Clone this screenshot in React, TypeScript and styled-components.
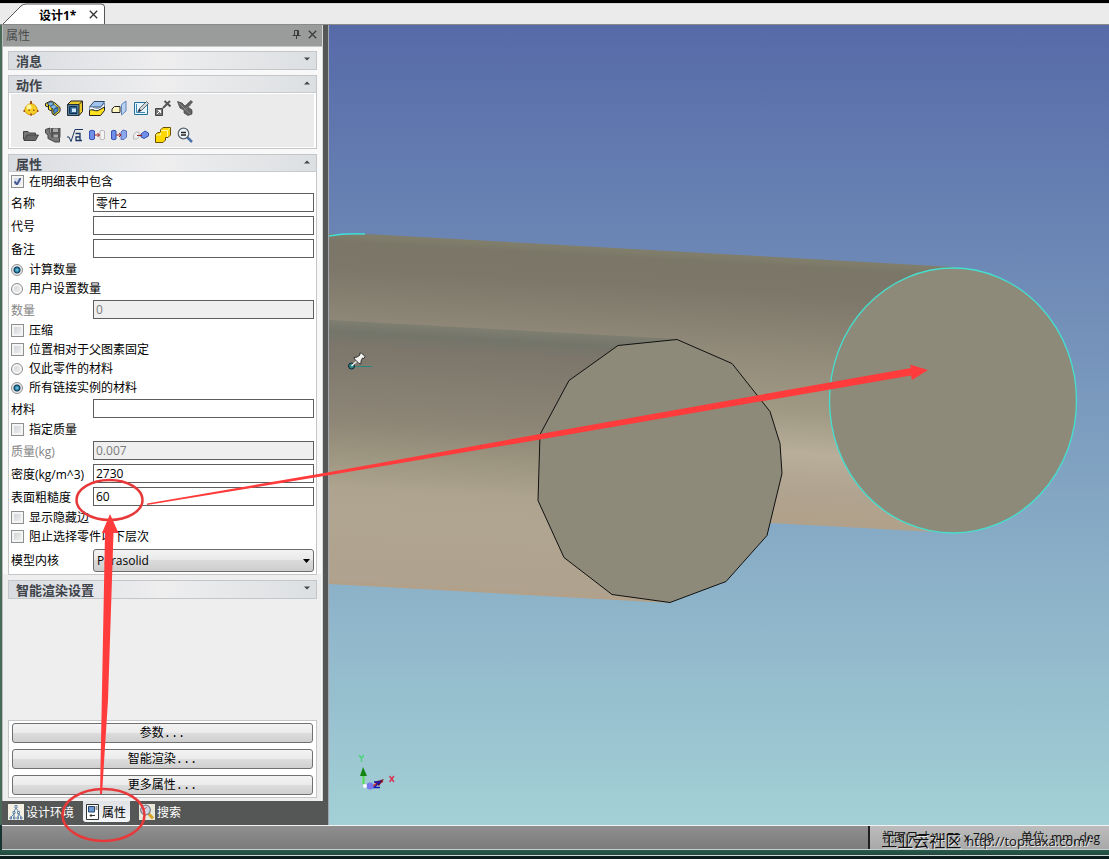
import React from "react";
import styled, { createGlobalStyle } from "styled-components";

const Global = createGlobalStyle`
  * { box-sizing: border-box; }
  body { margin: 0; background: #16332f; }
  body, button, input, select {
    font-family: "Open Sans", "Noto Sans CJK SC", sans-serif;
    font-size: 12px;
    color: #000;
  }
`;

const Shell = styled.div`
  position: relative;
  display: flex;
  flex-direction: column;
  min-height: 100vh;
  overflow: hidden;
`;

const TabBar = styled.header`
  display: flex;
  height: 25px;
  padding-left: 3px;
  border-top: 3px solid #000;
  border-bottom: 1px solid #8a8a8a;
  background: linear-gradient(#d8d8d8 1px, #ebebeb 1px);
`;

const DocTab = styled.div`
  position: relative;
  display: flex;
  align-items: center;
  gap: 13px;
  width: 102px;
  height: 21px;
  padding: 2px 0 0 36px;
  font-weight: 700;
  & > svg:first-child { position: absolute; left: 0; top: 0; }
  & > span, & > button { position: relative; }
`;

const PlainButton = styled.button`
  display: flex;
  align-items: center;
  justify-content: center;
  padding: 0;
  border: 0;
  background: none;
`;

const Main = styled.main`
  display: flex;
  flex: 1;
`;

const Dock = styled.aside`
  display: flex;
  flex-direction: column;
  flex: none;
  width: 329px;
  padding-right: 6px;
  border-left: 2px solid #4a6a58;
  background: linear-gradient(90deg, #555756 5px, #a2a7ad 5px) right / 6px 100% no-repeat, #555756;
`;

const Panel = styled.div`
  display: flex;
  flex-direction: column;
  flex: 1;
  border-left: 1px solid #b9bdbb;
  border-right: 1px solid #d8d8d8;
  background: #eeeeee;
`;

const PanelTitle = styled.div`
  display: flex;
  align-items: center;
  gap: 7px;
  height: 22px;
  padding: 0 5px 2px 3px;
  border-bottom: 1px solid #c4c6c5;
  background: #9a9c9b;
  color: #4a4c4b;
  & > span { flex: 1; }
`;

const Sections = styled.div`
  display: flex;
  flex-direction: column;
  flex: 1;
  gap: 5px;
  padding: 4px 4px 3px 5px;
  border-right: 1px solid #fafafa;
  background: linear-gradient(#f8f8f8 527px, #eeeeee 527px);
`;

const Section = styled.section`
  border: 1px solid #c4c7ca;
  background: #fff;
`;

const SectionHead = styled.h2`
  display: flex;
  align-items: center;
  justify-content: space-between;
  height: 17px;
  margin: 0;
  padding: 1px 6px 0 7px;
  background: linear-gradient(90deg, #d9dce1, #eeeeef 50%, #dcdfe2);
  color: #3f444b;
  font-size: 13px;
  line-height: 18px;
  font-weight: 700;
  &:not(:last-child) { box-shadow: inset 0 -1px #c8cbce; }
  svg { margin-bottom: 4px; }
`;

const Tools = styled.div`
  display: grid;
  grid-template-columns: repeat(8, 22px);
  grid-auto-rows: 27px;
  margin: 0 2px 1px 2px;
  padding-left: 9px;
  border-top: 1px solid #fff;
  background: #ebebeb;
  height: 54px;
`;

const Spacer = styled.div`
  flex: 1;
`;

const Check = styled.label`
  display: flex;
  align-items: center;
  gap: 5px;
  height: 19px;
  padding-left: 2px;
  line-height: 18px;
`;

const Box = styled.input`
  appearance: none;
  width: 13px;
  height: 13px;
  margin: 0;
  border: 1px solid #8e8f8f;
  background: linear-gradient(135deg, #c9cdd2, #f6f6f6);
  box-shadow: inset 0 0 0 2px #f4f4f4;
  &:checked {
    background: url("data:image/svg+xml,%3Csvg xmlns='http://www.w3.org/2000/svg' width='11' height='11'%3E%3Cpath d='M2.5 5.5L5 8.5L8.7 1.8' fill='none' stroke='%23465c96' stroke-width='2'/%3E%3C/svg%3E"),
      linear-gradient(135deg, #ccd2de, #f1f3f8);
  }
  &[type="radio"] {
    border-radius: 50%;
    width: 12px;
    height: 12px;
    margin-right: 1px;
  }
  &[type="radio"]:checked {
    background: radial-gradient(circle at 5px 5px, #8fd0e6 0, #2381a8 2px, #0f3552 3px, #e8eaec 4px);
    box-shadow: none;
  }
`;

const Field = styled.label<{ $off?: boolean; $tall?: boolean }>`
  display: grid;
  grid-template-columns: 82px 1fr;
  align-items: center;
  height: ${(p) => (p.$tall ? 28 : 23)}px;
  padding: 0 2px;
  color: ${(p) => (p.$off ? "#858585" : "#000")};
  white-space: nowrap;
`;

const TextBox = styled.input`
  width: 100%;
  min-width: 0;
  height: 19px;
  padding: 0 2px;
  border: 1px solid #5e5e5e;
  border-radius: 0;
  background: #fff;
  &:disabled { background: #efefef; color: #7b7b7b; }
`;

const SelectWrap = styled.span`
  position: relative;
  svg { position: absolute; right: 4px; top: 10px; pointer-events: none; }
`;

const Select = styled.select`
  display: block;
  appearance: none;
  width: 100%;
  height: 23px;
  padding: 0 3px;
  border: 1px solid #6c6c6c;
  border-radius: 3px;
  background: linear-gradient(#f3f3f3, #e8e8e8 50%, #dadada 50%, #cecece);
`;

const ButtonStack = styled(Section)`
  display: flex;
  flex-direction: column;
  gap: 6px;
  padding: 2px 3px;
`;

const WideButton = styled.button`
  height: 20px;
  padding: 0;
  border: 1px solid #707070;
  border-radius: 3px;
  background: linear-gradient(#f3f3f3, #ebebeb 50%, #dddddd 50%, #cfcfcf);
  line-height: 18px;
  span { font-family: "Liberation Mono", monospace; }
`;

const DockTabs = styled.nav`
  display: flex;
  align-items: flex-start;
  gap: 9px;
  height: 24px;
  padding: 0 0 0 6px;
`;

const DockTab = styled.button<{ $on?: boolean }>`
  display: flex;
  align-items: center;
  gap: 2px;
  height: 21px;
  padding: ${(p) => (p.$on ? "0 4px 0 3px" : "0")};
  border: 0;
  border-radius: 0 0 3px 3px;
  background: ${(p) => (p.$on ? "linear-gradient(#dfe2e6, #f4f6f8)" : "none")};
  color: ${(p) => (p.$on ? "#000" : "#fff")};
`;

const Viewport = styled.div`
  position: relative;
  flex: 1;
  min-width: 0;
  overflow: hidden;
  background: linear-gradient(#566aa8, #a3d0d6);
`;

const Scene = styled.svg`
  position: absolute;
  left: 0;
  top: 0;
  width: 100%;
  height: 100%;
`;

const Status = styled.footer`
  display: flex;
  height: 25px;
  margin: 0 0 0 2px;
  border-top: 1px solid #f2f4f4;
  border-bottom: 1px solid #c4d0cc;
  background: linear-gradient(#8f8f8f, #7b7b7b);
`;

const StatusFill = styled.div`
  flex: 1;
`;

const StatusCell = styled.div`
  display: flex;
  justify-content: space-between;
  align-items: center;
  width: 241px;
  padding: 0 9px 2px 12px;
  border-left: 2px solid #1f1f1f;
  background: linear-gradient(#bcbcbc, #a9a9a9);
  color: #111;
`;

const Watermark = styled.a`
  position: absolute;
  right: 19px;
  bottom: 7px;
  display: flex;
  gap: 5px;
  color: #111;
  font-size: 13px;
  line-height: 22px;
  text-decoration: none;
  text-shadow: 1px 1px 0 #e8e8e8;
  span { font-size: 16px; }
`;

const Desktop = styled.div`
  height: 9px;
  background: linear-gradient(#285a4c 0, #23483f 5px, #c9d6d2 5px, #c9d6d2 6px, #0b1c1c 6px);
`;

const Markup = styled.svg`
  position: absolute;
  left: 0;
  top: 0;
  pointer-events: none;
`;

const Caret = ({ up }: { up?: boolean }) => (
  <svg width="6" height="4" aria-hidden="true">
    <path d={up ? "M0 3.5L3 .5L6 3.5Z" : "M0 .5L3 3.5L6 .5Z"} fill="#444" />
  </svg>
);

const Cross = ({ size, color }: { size: number; color: string }) => (
  <svg width={size} height={size} viewBox="0 0 9 9" aria-hidden="true">
    <path d="M.8.8L8.2 8.2M8.2.8L.8 8.2" stroke={color} strokeWidth="1.3" />
  </svg>
);

const Y = "#ffe11f";
const icons: [string, React.ReactNode][] = [
  ["零件", <>
    <path d="M1 11H15" stroke="#c26a00" />
    <path d="M1.5 11Q2 4.500 8 3.500Q14 4.500 14.500 11Q12 15 8 15Q4 15 1.500 11Z" fill="#f4cf27" stroke="#d79a16" />
    <circle cx="6" cy="7" r="2.5" fill="#fff59b" />
    <path d="M7 1H9V4H7ZM.5 10H2V12H.5ZM14 10H15.5V12H14ZM7 13.500H9V15.500H7ZM5.500 9.500H7V11H5.500ZM10 9.500H11.500V11H10Z" fill="#a3561a" />
  </>],
  ["装配", <>
    <path d="M.5 3.5L6 1L10 3L15 7.5V11.5L10 15.5L7 13.5V11L3.5 9.5V7L.5 6Z" fill={Y} stroke="#222" />
    <path d="M2 3.8L6 2L9 3.8L5.5 6ZM5 6.5L9 4.5L12 7L8.5 9.5Z" fill="#83b5ea" stroke="#244f83" strokeWidth=".8" />
    <path d="M8.5 10L13 7V11L9 14Z" fill="#4c8ad0" stroke="#244f83" />
    <path d="M3.5 7V4.8M7 11V8" stroke="#222" />
  </>],
  ["抽壳", <>
    <path d="M.5 4.5L4 1H15.5V11.5L12 15.5H.5Z" fill="#e9c92a" stroke="#222" />
    <path d="M.5 4.5H12V15.5M12 4.5L15.5 1" fill="none" stroke="#222" />
    <path d="M1 5H11.500V15H1Z" fill="#77a9cc" stroke="#264a66" strokeWidth=".8" />
    <path d="M2.5 6.5H10V13.5H2.5Z" fill="#2f6590" stroke="#172c49" />
    <path d="M5 8.5H9V12H5Z" fill="#cbe8fa" />
  </>],
  ["剖切", <>
    <path d="M.5 7L5 1.5H15.5L12 7Z" fill="#9fc5ef" stroke="#354b69" />
    <path d="M.5 7.5C4 5 6 11 12 7L15.5 3V7C12 10 7 12 4 9.5L.5 10.5Z" fill="#fff" stroke="#5577a5" strokeWidth=".8" />
    <path d="M.5 10.5C4 8 6 13 11 9.5L15.5 7V10.5L11.5 15.5H.5Z" fill={Y} stroke="#222" />
  </>],
  ["镜像", <>
    <path d="M1 9L3.5 6.5H9V12.5H1Z" fill="#fff5c0" stroke="#222" />
    <path d="M10.5 4.5L15 1V11L10.5 15Z" fill="#b8d3f2" stroke="#6287bd" />
  </>],
  ["编辑草图", <>
    <path d="M1.5 2.5H14.5V14.5H1.5Z" fill="#e6f4fc" stroke="#247098" />
    <path d="M3.5 4V12.5H12" fill="none" stroke="#3d8bb2" />
    <path d="M5 12L6.5 8.5L13.5 1.5L15.5 3.5L8.5 10.5Z" fill="#d0d4d6" stroke="#3c4b54" strokeWidth=".8" />
    <path d="M5 12L6.4 8.7L8.2 10.5Z" fill="#224" />
  </>],
  ["缩放", <>
    <path d="M.5 8.5H7.5V15.5H.5Z" fill="#777" stroke="#444" />
    <path d="M2 14L5.5 10.5M3 10.5H5.5V13" stroke="#fff" fill="none" />
    <path d="M8 8L15 1M9.5 1L15.5 6.5" stroke="#565656" strokeWidth="2" />
  </>],
  ["解除", <>
    <path d="M.5 1.5L5 3L8 6L14 .5L15.5 2L11 7L15 10V14L11 15.5L7 13V10L3 8Z" fill="#616161" stroke="#444" strokeWidth=".7" />
    <path d="M2 3L13 14M6 11L14 5" stroke="#999" strokeWidth=".7" />
  </>],
  ["打开", <>
    <path d="M.5 12.5V4.5H5L6.5 6H12.5V8" fill="#777" stroke="#444" />
    <path d="M1 13.5L4 8H15.5L12.5 13.5Z" fill="#666" stroke="#444" />
  </>],
  ["保存", <>
    <path d="M.5 2.500L5 1V6L8 9V10.500H14.500V15H10L3 11.5V8L.5 6Z" fill="#777" stroke="#444" />
    <path d="M6 1H15.5V10.5H6Z" fill="#555" />
    <path d="M8 1.5H13V5H8ZM8.5 7.5H13V10.5H8.5Z" fill="#aaa" />
  </>],
  ["公式", <>
    <path d="M0 10H2L4 14.5L8 2.5H16" fill="none" stroke="#1b3763" />
    <path d="M8.5 6.5H13V13.5H9V10H13M13 13.5H15" fill="none" stroke="#1b3763" strokeWidth="1.3" />
  </>],
  ["约束一", <>
    <path d="M.5 4Q3 2.5 5.5 4V12Q3 13.5.5 12Z" fill="#6f8fe8" stroke="#3550b0" />
    <path d="M11 4Q13 2.5 15.5 4V12Q13 13.5 11 12Z" fill="#f3f3f3" stroke="#bbb" />
    <path d="M5.5 8H10.5M8.5 6L10.5 8L8.5 10" stroke="#a02020" fill="none" />
  </>],
  ["约束二", <>
    <path d="M.5 4Q3 2.5 5 4V12Q3 13.5.5 12Z" fill="#6f8fe8" stroke="#3550b0" />
    <path d="M10 5L12 3L15.5 4V10L13 12.5H10Z" fill="#8ea8ec" stroke="#5a6fc0" />
    <path d="M5 8H10M8 6L10 8L8 10" stroke="#a02020" fill="none" />
  </>],
  ["约束三", <>
    <path d="M.5 8L3 5H6V10L4 12H.5Z" fill="#eee" stroke="#b8b8b8" />
    <path d="M8 7L12 4L15.5 6V9L11 11.5L8 10Z" fill="#6f8fe8" stroke="#3550b0" />
    <path d="M4 8.5H9" stroke="#a02020" />
  </>],
  ["布尔", <>
    <path d="M.5 7.5L3 5.5H5.5V3L8 .5H15.5V8L13 10.5H10.5V13L8 15.5H.5Z" fill="#ffd800" stroke="#6b5200" />
    <path d="M6 3.5H12.5V10M1 8H5.5M12.5 3.5L15 1M5.5 5.5V8" fill="none" stroke="#fff6a0" />
  </>],
  ["查询", <>
    <path d="M10 10L15 15" stroke="#4972a9" strokeWidth="2.5" />
    <circle cx="6.5" cy="6.5" r="5.3" fill="#edf4f8" stroke="#56626d" strokeWidth="1.2" />
    <path d="M4 5.5H9M4 8H9" stroke="#222" strokeWidth="1.3" />
  </>],
];

const TreeIcon = () => (
  <svg width="16" height="16" aria-hidden="true">
    <path d="M0 0H16V16H0Z" fill="#f4f1e4" />
    <path d="M7 1.5H9V4H7ZM5 7.5H7V9.500H5ZM9.5 7.5H11.5V9.500H9.5ZM2 13H3.5V15H2ZM5.500 13H7V15H5.500ZM9 13H10.500V15H9ZM12.5 13H14V15H12.5ZM8 4L6 7.5M8 4L10.5 7.5M6 10L3 13M6 10V13M10.5 10L10 13M11 10L13 13" fill="none" stroke="#5c86ab" />
  </svg>
);

const PropsIcon = () => (
  <svg width="14" height="16" aria-hidden="true">
    <path d="M.5.5H12.5V15.5H.5Z" fill="#fff" stroke="#333" />
    <path d="M2.5 2.5H8.5V8H2.5Z" fill="#6d9ad0" stroke="#26466f" />
    <path d="M9.5 3H11.5M9.5 5H11.5M4 11.5H9M5.5 10L4 11.5L5.5 13" fill="none" stroke="#333" />
  </svg>
);

const FindIcon = () => (
  <svg width="16" height="16" aria-hidden="true">
    <path d="M0 0H16V16H0Z" fill="#e9e6da" />
    <path d="M9.5 9.5L14 14.5" stroke="#d8a52a" strokeWidth="3" />
    <circle cx="6.5" cy="6" r="4.8" fill="#cdd6e4" stroke="#76808f" strokeWidth="1.3" />
    <path d="M4.5 8V5L8 3.5" fill="none" stroke="#c66" />
  </svg>
);

const skew = "skewY(3.15)";

function Model() {
  return (
    <Scene role="img" aria-label="三维模型">
      <defs>
        <linearGradient id="back" gradientUnits="userSpaceOnUse" x1="0" x2="0" y1="209" y2="474" gradientTransform={skew}>
          <stop offset="0" stopColor="#807e6b" />
          <stop offset=".03" stopColor="#7a7668" />
          <stop offset=".13" stopColor="#7d776a" />
          <stop offset=".38" stopColor="#938c7b" />
          <stop offset=".58" stopColor="#a09a84" />
          <stop offset=".73" stopColor="#b8ae9a" />
          <stop offset=".88" stopColor="#b0a38f" />
          <stop offset="1" stopColor="#b1a18a" />
        </linearGradient>
        <linearGradient id="front" gradientUnits="userSpaceOnUse" x1="0" x2="0" y1="296" y2="559" gradientTransform={skew}>
          <stop offset="0" stopColor="#7d7d70" />
          <stop offset=".04" stopColor="#74756a" />
          <stop offset=".09" stopColor="#7c766b" />
          <stop offset=".37" stopColor="#8d8677" />
          <stop offset=".5" stopColor="#9c957f" />
          <stop offset=".63" stopColor="#ada38e" />
          <stop offset=".75" stopColor="#b0a590" />
          <stop offset=".98" stopColor="#afa28e" />
          <stop offset="1" stopColor="#b3a088" />
        </linearGradient>
      </defs>
      <g>
        <path d="M0 209H37L625 242V508L0 474Z" fill="url(#back)" />
        <path d="M0 211Q16 208 36 209" fill="none" stroke="#3fe0dc" strokeWidth="1.3" />
        <ellipse cx="624" cy="375.500" rx="123.5" ry="132.500" fill="#8d8a7a" stroke="#45dfcf" strokeWidth="1.3" />
        <path d="M0 295L348 314L341 578L0 559Z" fill="url(#front)" />
        <path d="M289 320.500L348 314.500L403 338.500L441 386.500L451 418.500L453 448.500L438 510.500L397 556.500L341 577.500L283 569.500L235 532.500L209 475.500L211 409.500L240 355.500Z" fill="#8d8a7a" stroke="#111" />
      </g>
      <g>
        <path d="M22 341.500H43" stroke="#2d8581" />
        <circle cx="22.500" cy="341" r="3" fill="#2d8581" stroke="#123" />
        <path d="M22.500 341L28 336" stroke="#eee" strokeWidth="1.5" />
        <path d="M25 332.500L28 332L31 330L30.500 328.500L32.500 328L36 331.500L35 333.500L33.500 333L32 336L32 339L30 338.500L25.500 334Z" fill="#f2f2ee" stroke="#333" />
      </g>
      <g strokeWidth="1.3" fill="none">
        <path d="M34.500 759V748" stroke="#56df4c" strokeWidth="2" />
        <path d="M31 751L34 742L38 751Z" fill="#138413" />
        <path d="M30 730L32.500 733L35 730M32.500 733V737" stroke="#45d474" />
        <path d="M60.500 751L65 757M65 751L60.500 757" stroke="#dc2b4b" />
        <path d="M35 761H44L54 756" stroke="#c33" strokeWidth="2" />
        <path d="M45 757L55 754L50 761Z" fill="#7b1730" />
        <path d="M45 757H51L45 762.500H51" stroke="#1717b4" />
        <circle cx="41" cy="761" r="3.500" fill="#7878ee" />
        <circle cx="36" cy="761" r="2" fill="#fff" />
      </g>
    </Scene>
  );
}

const TextField = ({ label, value = "", off }: { label: string; value?: string; off?: boolean }) => (
  <Field $off={off}>
    <span>{label}</span>
    <TextBox type="text" defaultValue={value} disabled={off} />
  </Field>
);

const Option = ({ label, on, group }: { label: string; on?: boolean; group?: string }) => (
  <Check>
    <Box type={group ? "radio" : "checkbox"} name={group} defaultChecked={on} />
    <span>{label}</span>
  </Check>
);

export default function App() {
  return (
    <Shell>
      <Global />
      <TabBar>
        <DocTab>
          <svg width="102" height="21" aria-hidden="true">
            <path d="M0 21L18 3Q20 1 23 1H98Q101.500 1 101.500 4V21" fill="#fff" stroke="#555" />
          </svg>
          <span>设计1*</span>
          <PlainButton aria-label="关闭文档"><Cross size={9} color="#333" /></PlainButton>
        </DocTab>
      </TabBar>
      <Main>
        <Dock>
          <Panel>
            <PanelTitle>
              <span>属性</span>
              <PlainButton aria-label="固定">
                <svg width="9" height="9" aria-hidden="true">
                  <path d="M2.500 .5H6.500V5.500H2.500ZM.5 5.500H8.500M4.500 5.500V9M5.500 .5V5" fill="none" stroke="#3c3c3c" />
                </svg>
              </PlainButton>
              <PlainButton aria-label="关闭面板"><Cross size={9} color="#3c3c3c" /></PlainButton>
            </PanelTitle>
            <Sections>
              <Section><SectionHead>消息<Caret /></SectionHead></Section>
              <Section>
                <SectionHead>动作<Caret up /></SectionHead>
                <Tools>
                  {icons.map(([name, art]) => (
                    <PlainButton key={name} aria-label={name}>
                      <svg width="16" height="16" fill="none" aria-hidden="true">{art}</svg>
                    </PlainButton>
                  ))}
                </Tools>
              </Section>
              <Section>
                <SectionHead>属性<Caret up /></SectionHead>
                <Option label="在明细表中包含" on />
                <TextField label="名称" value="零件2" />
                <TextField label="代号" />
                <TextField label="备注" />
                <Option label="计算数量" group="count" on />
                <Option label="用户设置数量" group="count" />
                <TextField label="数量" value="0" off />
                <Option label="压缩" />
                <Option label="位置相对于父图素固定" />
                <Option label="仅此零件的材料" group="material" />
                <Option label="所有链接实例的材料" group="material" on />
                <TextField label="材料" />
                <Option label="指定质量" />
                <TextField label="质量(kg)" value="0.007" off />
                <TextField label="密度(kg/m^3)" value="2730" />
                <TextField label="表面粗糙度" value="60" />
                <Option label="显示隐藏边" />
                <Option label="阻止选择零件以下层次" />
                <Field $tall>
                  <span>模型内核</span>
                  <SelectWrap>
                    <Select defaultValue="Parasolid"><option>Parasolid</option></Select>
                    <svg width="7" height="4" aria-hidden="true"><path d="M0 0H7L3.500 4Z" /></svg>
                  </SelectWrap>
                </Field>
              </Section>
              <Section><SectionHead>智能渲染设置<Caret /></SectionHead></Section>
              <Spacer />
              <ButtonStack as="div">
                <WideButton>参数<span>...</span></WideButton>
                <WideButton>智能渲染<span>...</span></WideButton>
                <WideButton>更多属性<span>...</span></WideButton>
              </ButtonStack>
            </Sections>
          </Panel>
          <DockTabs>
            <DockTab><TreeIcon />设计环境</DockTab>
            <DockTab $on><PropsIcon />属性</DockTab>
            <DockTab><FindIcon />搜索</DockTab>
          </DockTabs>
        </Dock>
        <Viewport><Model /></Viewport>
      </Main>
      <Status>
        <StatusFill />
        <StatusCell>
          <span>视图尺寸:1173 x 799</span>
          <span>单位: mm, deg</span>
        </StatusCell>
      </Status>
      <Desktop />
      <Watermark href="http://top.caxa.com/">
        <span>工业云社区</span>http://top.caxa.com/
      </Watermark>
      <Markup width="940" height="850" aria-hidden="true">
        <g fill="none" stroke="#e8393a" strokeWidth="2.500">
          <ellipse cx="109.500" cy="500" rx="33" ry="20" />
          <ellipse cx="103.500" cy="815" rx="41" ry="26" />
        </g>
        <path d="M147 503.500L330 472L540 434L911 368L910 364.500L928 370L912 380L911 375.500L540 439.500L330 475L147 505Z" fill="#ff3b3b" />
        <path d="M100 794L105 533L102 533L110 514L118.500 533L113.500 533L108 700L102 794Z" fill="#ff3b3b" />
      </Markup>
    </Shell>
  );
}
